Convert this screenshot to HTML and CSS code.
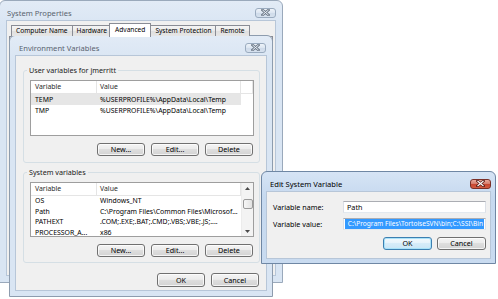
FILE: index.html
```html
<!DOCTYPE html>
<html lang="en">
<head>
    <meta charset="UTF-8">
    <meta name="viewport" content="width=device-width, initial-scale=1.0">
    <title>Environment Variables</title>
    <link rel="stylesheet" href="styles.css">
</head>
<body>
    <div class="desktop">
        <div class="window sysprops">
            <div class="titlebar">
                <span class="title">System Properties</span>
                <span class="close-btn">
                    <svg width="9" height="7" viewBox="0 0 9 7"><path d="M1.5 1 L7.5 6 M7.5 1 L1.5 6" stroke="#6f7b8a" stroke-width="2.6" stroke-linecap="square"/><path d="M1.5 1 L7.5 6 M7.5 1 L1.5 6" stroke="#e9eff6" stroke-width="1"/></svg>
                </span>
            </div>
            <div class="client">
                <div class="tabs">
                    <span class="tab">Computer Name</span>
                    <span class="tab">Hardware</span>
                    <span class="tab selected">Advanced</span>
                    <span class="tab">System Protection</span>
                    <span class="tab">Remote</span>
                </div>
                <div class="tab-page"></div>
            </div>
        </div>

        <div class="window envvars">
            <div class="titlebar">
                <span class="title">Environment Variables</span>
                <span class="close-btn">
                    <svg width="9" height="7" viewBox="0 0 9 7"><path d="M1.5 1 L7.5 6 M7.5 1 L1.5 6" stroke="#6f7b8a" stroke-width="2.6" stroke-linecap="square"/><path d="M1.5 1 L7.5 6 M7.5 1 L1.5 6" stroke="#e9eff6" stroke-width="1"/></svg>
                </span>
            </div>
            <div class="client">
                <fieldset class="group user-group">
                    <legend>User variables for jmerritt</legend>
                    <div class="list user-list">
                        <div class="list-body">
                            <div class="list-head">
                                <span class="col-name">Variable</span>
                                <span class="col-value">Value</span>
                                <span class="col-rest"></span>
                            </div>
                            <div class="row selected">
                                <span class="col-name">TEMP</span>
                                <span class="col-value">%USERPROFILE%\AppData\Local\Temp</span>
                            </div>
                            <div class="row">
                                <span class="col-name">TMP</span>
                                <span class="col-value">%USERPROFILE%\AppData\Local\Temp</span>
                            </div>
                        </div>
                    </div>
                    <div class="button-row">
                        <button class="btn">New...</button>
                        <button class="btn">Edit...</button>
                        <button class="btn">Delete</button>
                    </div>
                </fieldset>

                <fieldset class="group system-group">
                    <legend>System variables</legend>
                    <div class="list system-list">
                        <div class="list-body">
                            <div class="list-head">
                                <span class="col-name">Variable</span>
                                <span class="col-value">Value</span>
                            </div>
                            <div class="row">
                                <span class="col-name">OS</span>
                                <span class="col-value">Windows_NT</span>
                            </div>
                            <div class="row">
                                <span class="col-name">Path</span>
                                <span class="col-value">C:\Program Files\Common Files\Microsof...</span>
                            </div>
                            <div class="row">
                                <span class="col-name">PATHEXT</span>
                                <span class="col-value">.COM;.EXE;.BAT;.CMD;.VBS;.VBE;.JS;....</span>
                            </div>
                            <div class="row">
                                <span class="col-name">PROCESSOR_A...</span>
                                <span class="col-value">x86</span>
                            </div>
                        </div>
                        <div class="scrollbar">
                            <span class="scroll-arrow">
                                <svg width="5" height="3" viewBox="0 0 5 3"><path d="M0 3 L2.5 0 L5 3 Z" fill="#4a4a4a"/></svg>
                            </span>
                            <span class="scroll-thumb"></span>
                            <span class="scroll-track"></span>
                            <span class="scroll-arrow">
                                <svg width="5" height="3" viewBox="0 0 5 3"><path d="M0 0 L2.5 3 L5 0 Z" fill="#4a4a4a"/></svg>
                            </span>
                        </div>
                    </div>
                    <div class="button-row">
                        <button class="btn">New...</button>
                        <button class="btn">Edit...</button>
                        <button class="btn">Delete</button>
                    </div>
                </fieldset>

                <div class="button-row dialog-buttons">
                    <button class="btn">OK</button>
                    <button class="btn">Cancel</button>
                </div>
            </div>
        </div>

        <div class="window editvar active">
            <div class="titlebar">
                <span class="title">Edit System Variable</span>
                <span class="close-btn">
                    <svg width="9" height="7" viewBox="0 0 9 7"><path d="M1.5 1 L7.5 6 M7.5 1 L1.5 6" stroke="#5a1d17" stroke-width="2.6" stroke-linecap="square"/><path d="M1.5 1 L7.5 6 M7.5 1 L1.5 6" stroke="#ffffff" stroke-width="1.1"/></svg>
                </span>
            </div>
            <div class="client">
                <div class="field-row">
                    <span class="field-label">Variable name:</span>
                    <span class="textbox">Path</span>
                </div>
                <div class="field-row">
                    <span class="field-label">Variable value:</span>
                    <span class="textbox value-box"><span class="selection">C:\Program Files\TortoiseSVN\bin;C:\SSI\Bin</span></span>
                </div>
                <div class="button-row edit-buttons">
                    <button class="btn default">OK</button>
                    <button class="btn">Cancel</button>
                </div>
            </div>
        </div>
    </div>
</body>
</html>
```

FILE: styles.css
```css
* {
    box-sizing: border-box;
}

body {
    margin: 0;
    width: 498px;
    height: 299px;
    overflow: hidden;
    background: #fff;
    font-family: "Noto Sans", sans-serif;
    font-size: 7.2px;
    color: #000;
}

.desktop {
    position: relative;
    width: 498px;
    height: 299px;
}

/* windows */
.window {
    position: absolute;
    display: flex;
    flex-direction: column;
    border: 1px solid #9aa9bb;
    border-radius: 6px 6px 0 0;
    background: linear-gradient(#e2ebf6, #d9e5f3 25px, #d9e5f3);
}

.sysprops {
    left: -1px;
    top: 0;
    width: 284px;
    height: 283px;
}

.envvars {
    left: 9px;
    top: 35px;
    width: 264px;
    height: 262px;
    border-color: #8d9cae;
}

.editvar {
    left: 261px;
    top: 171px;
    width: 235px;
    height: 93px;
    border-color: #6f87a4;
    background: linear-gradient(#d6e4f5, #c6d9ef 25px, #c9dbf0);
}

.titlebar {
    flex: none;
    display: flex;
    align-items: center;
    justify-content: space-between;
    height: 20px;
    padding: 3px 6px 0 7px;
    font-size: 7.6px;
}

.envvars .titlebar {
    padding-left: 9px;
}

.editvar .titlebar {
    padding: 3px 4px 0 8px;
}

.title {
    color: #59636f;
    white-space: nowrap;
}

.active .title {
    color: #000;
}

.close-btn {
    display: flex;
    align-items: center;
    justify-content: center;
    width: 21px;
    height: 10px;
    border: 1px solid #9aabbf;
    border-radius: 3px;
    background: linear-gradient(#eef3f9, #dbe5f1 50%, #cfdbea 50%, #d6e1ee);
}

.active .close-btn {
    height: 10px;
    border-color: #7a3028;
    background: linear-gradient(#e9a99c, #d7806f 45%, #c7452f 50%, #d35c41);
}

.client {
    flex: 1;
    display: flex;
    flex-direction: column;
    background: #f0f0f0;
    box-shadow: 0 0 0 1px #b7c6d8;
}

.sysprops .client {
    margin: 0 7px 7px 7px;
}

.envvars .client {
    margin: 0 6px 6px 6px;
    padding: 0 0 3px 0;
}

.editvar .client {
    margin: 0 5px 5px 5px;
    padding: 9px 4px 0 6px;
}

/* tabs */
.tabs {
    flex: none;
    display: flex;
    align-items: flex-end;
    height: 15px;
    padding-left: 4px;
    position: relative;
    z-index: 1;
    font-size: 6.6px;
}

.tab {
    height: 11px;
    line-height: 10px;
    padding: 0 4px;
    margin-right: -1px;
    border: 1px solid #898c95;
    border-bottom: none;
    background: linear-gradient(#f4f4f4, #ebebeb 50%, #dfdfdf 50%, #e6e6e6);
    white-space: nowrap;
}

.tab.selected {
    position: relative;
    z-index: 1;
    height: 14px;
    line-height: 12px;
    margin: 0 -1px -1px -2px;
    padding: 0 5px;
    background: #fff;
}

.tab-page {
    flex: 1;
    margin: 0 2px 30px 2px;
    border: 1px solid #898c95;
    background: #fff;
}

/* group boxes */
.group {
    margin: 0 6px 0 7px;
    padding: 0 5px 6px 6px;
    min-width: 0;
    border: 1px solid #d5dfe5;
    border-radius: 3px;
}

.user-group {
    margin-top: 9px;
}

.system-group {
    margin-top: 4px;
    padding-bottom: 5px;
}

.group legend {
    margin-left: -3px;
    padding: 0 2px;
    line-height: 11px;
    color: #1a1a1a;
}

/* list views */
.list {
    display: flex;
    margin-top: 4px;
    border: 1px solid #9e9e9e;
    background: #fff;
    overflow: hidden;
    font-size: 6.9px;
}

.user-list {
    height: 56px;
}

.system-list {
    height: 55px;
}

.list-body {
    flex: 1;
    min-width: 0;
}

.list-head {
    display: flex;
    height: 13px;
    line-height: 12px;
    border-bottom: 1px solid #e5e5e5;
    color: #2b2b2b;
}

.list-head span {
    border-right: 1px solid #e5e5e5;
}

.col-name,
.col-value {
    flex: none;
    padding-left: 4px;
    overflow: hidden;
    white-space: nowrap;
}

.col-name {
    width: 66px;
}

.col-value {
    width: 144px;
    padding-left: 3px;
}

.col-rest {
    flex: 1;
}

.row {
    display: flex;
    height: 11px;
    line-height: 11px;
}

.row.selected .col-name,
.row.selected .col-value {
    background: #e6e6e6;
}

.system-list .row {
    height: 10.5px;
    line-height: 10.5px;
}

.scrollbar {
    flex: none;
    display: flex;
    flex-direction: column;
    align-items: center;
    width: 12px;
    background: #f3f3f3;
    border-left: 1px solid #ececec;
}

.scroll-arrow {
    display: flex;
    align-items: center;
    justify-content: center;
    width: 100%;
    height: 10px;
}

.scroll-thumb {
    margin-top: 6px;
    width: 10px;
    height: 10px;
    border: 1px solid #9a9a9a;
    border-radius: 2px;
    background: linear-gradient(to right, #f6f6f6, #e2e2e2);
}

.scroll-track {
    flex: 1;
}

/* buttons */
.button-row {
    display: flex;
    justify-content: flex-end;
    gap: 6px;
    margin-top: 7px;
    padding-right: 1px;
}

.btn {
    width: 48px;
    height: 13px;
    padding: 0;
    border: 1px solid #707070;
    border-radius: 3px;
    background: linear-gradient(#f4f4f4, #ececec 45%, #dedede 50%, #d3d3d3);
    box-shadow: inset 0 0 0 1px rgba(255, 255, 255, 0.75);
    font: inherit;
    line-height: 11px;
    color: #000;
}

.dialog-buttons {
    margin-top: 10px;
    padding-right: 7px;
}

.dialog-buttons .btn {
    height: 14px;
}

.edit-buttons {
    margin-top: 7px;
    gap: 5px;
    padding-right: 0;
}

.edit-buttons .btn {
    width: 49px;
}

.btn.default {
    border-color: #3c7fb1;
    background: linear-gradient(#f3f9fd, #e6f3fb 45%, #d6ecf9 50%, #cae6f6);
    box-shadow: inset 0 0 0 1px #a9e2f9;
}

/* edit dialog fields */
.field-row {
    display: flex;
    align-items: center;
    justify-content: space-between;
}

.field-row + .field-row {
    margin-top: 5px;
}

.textbox {
    display: flex;
    align-items: center;
    width: 143px;
    height: 12px;
    padding: 0 3px;
    border: 1px solid #dbdfe6;
    border-top-color: #abadb3;
    border-bottom-color: #e3e9ef;
    background: #fff;
    overflow: hidden;
    white-space: nowrap;
}

.value-box {
    padding: 0 1px;
}

.selection {
    flex: 1;
    min-width: 0;
    height: 10px;
    line-height: 10px;
    padding: 0 1px;
    background: #3399ff;
    color: #fff;
    font-size: 6.6px;
    text-align: right;
}
```
